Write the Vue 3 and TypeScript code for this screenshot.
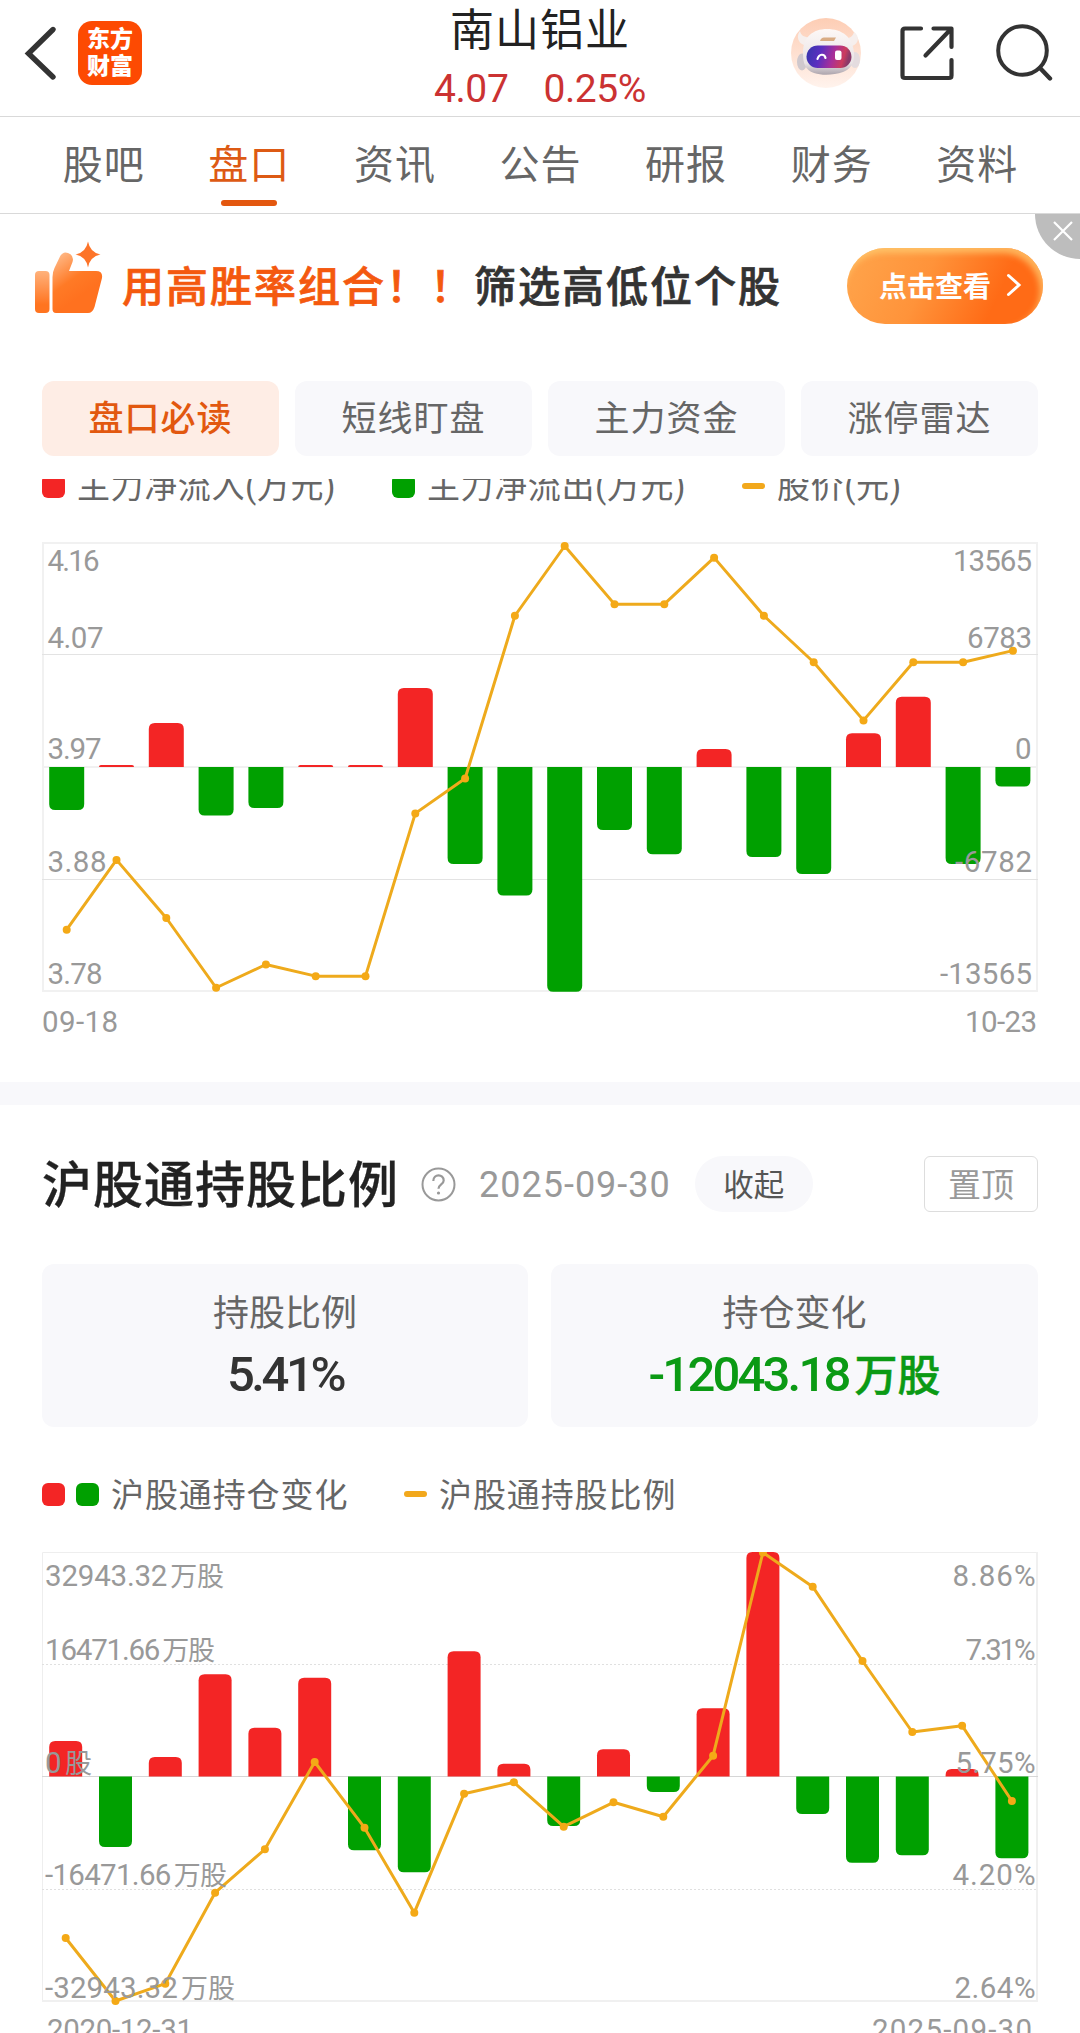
<script setup lang="ts">
interface AxisLabel {
  num: string
  unit?: string
  y: number
  w: number
}

const navTabs = ['股吧', '盘口', '资讯', '公告', '研报', '财务', '资料']
const pills = ['盘口必读', '短线盯盘', '主力资金', '涨停雷达']

const PITCH = 49.8
const barLeft = (i: number) => 7.2 + PITCH * i

// Bars run from the zero line to the value's height; rounded only on the far end.
function barPath(i: number, end: number, zero: number, width: number): string {
  const x = barLeft(i)
  const r = Math.min(6, Math.abs(end - zero))
  const d = end < zero ? 1 : -1
  return `M${x} ${zero}V${end + d * r}Q${x} ${end} ${x + r} ${end}H${x + width - r}Q${x + width} ${end} ${x + width} ${end + d * r}V${zero}Z`
}

const flowZero = 225
const flowBars = [268, 223, 181, 273.5, 266, 223, 223, 146, 322, 353.5, 449.7, 288, 312.3, 207, 315, 332, 191.3, 154.8, 322, 244.4]
const prices = [3.83, 3.89, 3.84, 3.78, 3.8, 3.79, 3.79, 3.93, 3.96, 4.1, 4.16, 4.11, 4.11, 4.15, 4.1, 4.06, 4.01, 4.06, 4.06, 4.07]
const pricePoints = prices.map((p, i) => ({ x: barLeft(i) + 17.5, y: 4 + (4.16 - p) * 1162.5 }))

const holdZero = 224.5
const holdBars = [189, 295, 205, 122.3, 175.7, 125.7, 298.3, 320.3, 99.3, 211.7, 274, 197.3, 240, 156.3, 0, 262, 310.7, 303.3, 217, 306.3]
const holdY = [386, 449, 431.7, 340.7, 297.3, 210, 275.7, 360.7, 241.7, 230.3, 274.7, 250.3, 264.7, 203.7, 0.5, 34.7, 109, 180, 173.7, 249]
const holdPoints = holdY.map((y, i) => ({ x: barLeft(i) + 16.5, y }))

const toLine = (pts: { x: number; y: number }[]) => pts.map((p) => `${p.x},${p.y}`).join(' ')

const flowLeft: AxisLabel[] = [
  { num: '4.16', y: 29.4, w: 52 },
  { num: '4.07', y: 105.5, w: 56 },
  { num: '3.97', y: 217, w: 54 },
  { num: '3.88', y: 330, w: 59 },
  { num: '3.78', y: 442.2, w: 55 },
]
const flowRight: AxisLabel[] = [
  { num: '13565', y: 29.4, w: 79 },
  { num: '6783', y: 105.5, w: 65 },
  { num: '0', y: 217, w: 17 },
  { num: '-6782', y: 330, w: 77 },
  { num: '-13565', y: 442.2, w: 92 },
]
const holdLeft: AxisLabel[] = [
  { num: '32943.32', unit: '万股', y: 34, w: 179 },
  { num: '16471.66', unit: '万股', y: 108, w: 170 },
  { num: '0', unit: '股', y: 221, w: 47 },
  { num: '-16471.66', unit: '万股', y: 333, w: 182 },
  { num: '-32943.32', unit: '万股', y: 445.7, w: 190 },
]
const holdRight: AxisLabel[] = [
  { num: '8.86%', y: 34, w: 83 },
  { num: '7.31%', y: 108, w: 70 },
  { num: '5.75%', y: 221, w: 80 },
  { num: '4.20%', y: 333, w: 83 },
  { num: '2.64%', y: 445.7, w: 81 },
]
</script>

<template>
  <div class="app">
    <header class="header">
      <div class="side left">
        <svg class="back" width="34" height="56" viewBox="0 0 34 56">
          <path d="M29 4.500L4.500 28.500L29 52" fill="none" stroke="#333" stroke-width="5.400" stroke-linecap="round" />
        </svg>
        <div class="logo"><span>东方</span><span>财富</span></div>
      </div>
      <div class="stock">
        <div class="name">南山铝业</div>
        <div class="quote"><span>4.07</span><span>0.25%</span></div>
      </div>
      <div class="side right">
        <svg width="70" height="72" viewBox="0 0 70 72">
          <defs>
            <linearGradient id="halo" x1="0" y1="0" x2="0" y2="1">
              <stop offset="0" stop-color="#fdcdb4" />
              <stop offset="1" stop-color="#fff3ed" />
            </linearGradient>
            <linearGradient id="visor" x1="0" y1="0" x2="1" y2="0.150">
              <stop offset="0" stop-color="#3436ac" />
              <stop offset="0.350" stop-color="#5b2fc0" />
              <stop offset="0.650" stop-color="#a92f98" />
              <stop offset="0.880" stop-color="#cc3c5e" />
              <stop offset="1" stop-color="#8a3a6a" />
            </linearGradient>
            <linearGradient id="shell" x1="0" y1="0" x2="0" y2="1">
              <stop offset="0" stop-color="#fdf8f6" />
              <stop offset="0.750" stop-color="#e9e3e5" />
              <stop offset="1" stop-color="#aca4ac" />
            </linearGradient>
          </defs>
          <circle cx="35" cy="36" r="35" fill="url(#halo)" />
          <path d="M9 14C5 19 7 26 13 28L21 20C14 21 10 19 9 14ZM63 15C69 19 68 27 61 29L52 21C59 22 62 19 63 15Z" fill="#f6efed" />
          <ellipse cx="11" cy="45" rx="5" ry="8.500" fill="#cfc8cd" />
          <ellipse cx="64" cy="43" rx="5" ry="8" fill="#e4dcdf" />
          <path d="M12 36C12 20 22 12 36 12C51 12 62 20 63 36C64 47 58 53 52 55C43 58 32 59 23 56C14 53 12 46 12 36Z" fill="url(#shell)" />
          <path d="M29 24Q30 20.500 33 20.500H45L43 24Z" fill="#d9ac84" />
          <rect x="15.500" y="28.500" width="45" height="22.500" rx="11.250" fill="url(#visor)" />
          <path d="M26.500 42C28 36.500 33.500 36.500 34.500 41" fill="none" stroke="#fff" stroke-width="2.200" stroke-linecap="round" />
          <rect x="44" y="33.500" width="6.500" height="9.500" rx="2" fill="#fff" />
        </svg>
        <svg class="share" width="56" height="56" viewBox="0 0 56 56">
          <path d="M22 3.500H6Q3.500 3.500 3.500 6V50.500Q3.500 53 6 53H50Q52.500 53 52.500 50.500V35M34.500 3.500H52.500V22M52 4L26.500 30.500" fill="none" stroke="#333" stroke-width="4.200" stroke-linecap="round" stroke-linejoin="round" />
        </svg>
        <svg width="58" height="60" viewBox="0 0 58 60">
          <circle cx="27.500" cy="27.500" r="24.300" fill="none" stroke="#333" stroke-width="4" />
          <path d="M45 45L55 55.500" stroke="#333" stroke-width="4.400" stroke-linecap="round" />
        </svg>
      </div>
    </header>

    <nav class="nav">
      <div v-for="(t, i) in navTabs" :key="t" class="nav-item" :class="{ on: i === 1 }">{{ t }}</div>
    </nav>

    <section class="banner">
      <svg class="thumb" width="68" height="74" viewBox="0 0 68 74">
        <defs>
          <linearGradient id="palm" x1="0.200" y1="0" x2="0.600" y2="0.700">
            <stop offset="0" stop-color="#ffb784" />
            <stop offset="0.600" stop-color="#ff7a26" />
            <stop offset="1" stop-color="#ff711f" />
          </linearGradient>
          <linearGradient id="cuff" x1="0" y1="0" x2="0" y2="1">
            <stop offset="0" stop-color="#ffb27c" />
            <stop offset="0.800" stop-color="#ff7420" />
          </linearGradient>
        </defs>
        <rect x="0" y="30" width="14.500" height="42" rx="4" fill="url(#cuff)" />
        <path d="M17.500 36Q17.500 31 19.500 27L25 15.500Q28 10 33 12Q39.500 14.500 37.500 21L34 30H61Q68 30 67 37L59.500 66Q57.500 72 53 72H21Q17.500 72 17.500 68Z" fill="url(#palm)" />
        <path d="M53 0.500Q55 11.500 65.500 13.500Q55 15.500 53 26.500Q51 15.500 40.500 13.500Q51 11.500 53 0.500Z" fill="#fd7429" />
      </svg>
      <div class="slogan"><span class="hot">用高胜率组合！！</span>筛选高低位个股</div>
      <button class="cta">
        <span>点击查看</span>
        <svg width="16" height="24" viewBox="0 0 16 24">
          <path d="M2.500 2.500L13 12L2.500 21.500" fill="none" stroke="#fff" stroke-width="3" stroke-linecap="round" />
        </svg>
      </button>
      <div class="close">
        <svg width="20" height="20" viewBox="0 0 20 20">
          <path d="M1 1L19 19M19 1L1 19" stroke="#fff" stroke-width="2.200" />
        </svg>
      </div>
    </section>

    <div class="pills">
      <div v-for="(p, i) in pills" :key="p" class="pill" :class="{ on: i === 0 }">{{ p }}</div>
    </div>

    <main class="scroll">
      <div class="legend first">
        <i class="sq red" /><span class="a">主力净流入(万元)</span>
        <i class="sq green" /><span class="b">主力净流出(万元)</span>
        <i class="dash" /><span>股价(元)</span>
      </div>

      <svg class="chart flow" width="996" height="500" viewBox="0 0 996 500">
        <rect x="1" y="1" width="994" height="448" fill="none" stroke="#f1f1f1" stroke-width="2" />
        <path d="M0 112.500H996M0 337.500H996" stroke="#e3e3e3" />
        <path d="M0 225H996" stroke="#f1f1f1" stroke-width="2" />
        <path v-for="(b, i) in flowBars" :key="i" :d="barPath(i, b, flowZero, 35)" :fill="b < flowZero ? '#f32525' : '#00a000'" />
        <polyline :points="toLine(pricePoints)" class="line" />
        <circle v-for="(p, i) in pricePoints" :key="'p' + i" :cx="p.x" :cy="p.y" r="4" class="dot" />
        <text v-for="l in flowLeft" :key="l.num" x="5.500" :y="l.y" :textLength="l.w">{{ l.num }}</text>
        <text v-for="l in flowRight" :key="l.num" :x="990 - l.w" :y="l.y" :textLength="l.w">{{ l.num }}</text>
        <text x="0" y="490.200" textLength="76">09-18</text>
        <text x="923" y="490.200" textLength="72">10-23</text>
      </svg>

      <div class="divider" />

      <div class="title-row">
        <h2>沪股通持股比例</h2>
        <svg class="help" width="35" height="35" viewBox="0 0 35 35">
          <circle cx="17.500" cy="17.500" r="16" fill="none" stroke="#999" stroke-width="2" />
          <path d="M12.300 14C12.300 6.500 22.700 6.500 22.700 13.500C22.700 17.500 17.500 17.500 17.500 21.800" fill="none" stroke="#999" stroke-width="2.200" />
          <circle cx="17.500" cy="26" r="1.600" fill="#999" />
        </svg>
        <span class="date">2025-09-30</span>
        <button class="fold">收起</button>
        <button class="pin">置顶</button>
      </div>

      <div class="cards">
        <div class="card">
          <div class="label">持股比例</div>
          <div class="value">5.41%</div>
        </div>
        <div class="card">
          <div class="label">持仓变化</div>
          <div class="value down">-12043.18<em>万股</em></div>
        </div>
      </div>

      <div class="legend second">
        <i class="sq red" /><i class="sq green" /><span class="c">沪股通持仓变化</span>
        <i class="dash" /><span>沪股通持股比例</span>
      </div>

      <svg class="chart hold" width="996" height="500" viewBox="0 0 996 500">
        <path d="M0.500 450V0.500H996" fill="none" stroke="#eee" />
        <path d="M995 0V449H0" fill="none" stroke="#f0f0f0" stroke-width="2" />
        <path d="M0 112.500H996M0 337.500H996" stroke="#e0e0e0" stroke-dasharray="2 2" />
        <path d="M0 224.500H996" stroke="#d6d6d6" />
        <path v-for="(b, i) in holdBars" :key="i" :d="barPath(i, b, holdZero, 33)" :fill="b < holdZero ? '#f32525' : '#00a000'" />
        <polyline :points="toLine(holdPoints)" class="line" />
        <circle v-for="(p, i) in holdPoints" :key="'h' + i" :cx="p.x" :cy="p.y" r="4" class="dot" />
        <text v-for="l in holdLeft" :key="l.num" x="3" :y="l.y" :textLength="l.w">{{ l.num }}<tspan class="unit" dx="3">{{ l.unit }}</tspan></text>
        <text v-for="l in holdRight" :key="l.num" :x="993.500 - l.w" :y="l.y" :textLength="l.w">{{ l.num }}</text>
        <text x="5" y="487.500" textLength="146">2020-12-31</text>
        <text x="830" y="487.500" textLength="160">2025-09-30</text>
      </svg>
    </main>
  </div>
</template>

<style>
body {
  margin: 0;
  background: #fff;
}
</style>

<style scoped>
.app {
  width: 1080px;
  height: 2033px;
  overflow: hidden;
  display: flex;
  flex-direction: column;
  background: #fff;
  color: #666;
  font-family: Roboto, 'Noto Sans CJK SC', sans-serif;
}
.app * {
  box-sizing: border-box;
}
svg {
  display: block;
  flex: none;
}
button {
  border: 0;
  padding: 0;
  font-family: inherit;
}

.header {
  height: 117px;
  flex: none;
  display: grid;
  grid-template-columns: 1fr 240px 1fr;
  border-bottom: 1px solid #d9d9d9;
}
.side {
  display: flex;
  align-items: flex-start;
}
.side.left {
  padding: 21px 0 0 24px;
}
.back {
  margin-top: 4px;
}
.logo {
  width: 64px;
  height: 64px;
  margin-left: 20px;
  border-radius: 14px;
  background: #fd4a02;
  color: #fff;
  font-size: 23px;
  line-height: 27px;
  font-weight: 900;
  display: flex;
  flex-direction: column;
  align-items: center;
  padding-top: 5px;
}
.side.right {
  justify-content: flex-end;
  padding: 17px 25px 0 0;
}
.side.right svg:last-child {
  margin: 6px 2px 0 40px;
}
.share {
  margin: 8px 0 0 38px;
}
.stock {
  display: flex;
  flex-direction: column;
  align-items: center;
}
.name {
  height: 60px;
  line-height: 62px;
  font-size: 44px;
  letter-spacing: 1px;
  color: #222;
}
.quote {
  display: flex;
  gap: 35px;
  height: 56px;
  line-height: 59px;
  font-size: 39px;
  letter-spacing: -0.400px;
  color: #cb3232;
}

.nav {
  height: 97px;
  flex: none;
  display: flex;
  padding: 0 30px 0 31px;
  border-bottom: 1px solid #d9d9d9;
}
.nav-item {
  flex: 1;
  display: flex;
  flex-direction: column;
  align-items: center;
  line-height: 98px;
  font-size: 40px;
  letter-spacing: 1px;
}
.nav-item.on {
  color: #dd5a14;
}
.nav-item.on::after {
  content: '';
  width: 56px;
  height: 6px;
  margin-top: -15px;
  border-radius: 3px;
  background: #e3570f;
}

.banner {
  position: relative;
  height: 144px;
  flex: none;
  display: flex;
  align-items: center;
  padding: 0 37px 0 35px;
}
.thumb {
  margin-top: -17px;
}
.slogan {
  margin: -6px 0 0 19px;
  font-size: 42px;
  letter-spacing: 2px;
  font-weight: 500;
  -webkit-text-stroke: 0.700px currentColor;
  color: #333;
  white-space: nowrap;
}
.hot {
  color: #f4590f;
}
.cta {
  width: 196px;
  height: 76px;
  margin-left: auto;
  border-radius: 38px;
  display: flex;
  align-items: center;
  padding: 0 0 2px 32px;
  gap: 15px;
  color: #fff;
  font-size: 28px;
  font-weight: 700;
  background: linear-gradient(115deg, #ffa54c 0%, #ff933a 40%, #ff6b16 75%, #ff6b16 100%);
  box-shadow: inset -3px 5px 6px rgba(255, 205, 115, 0.75);
}
.close {
  position: absolute;
  top: 0;
  right: 0;
  width: 45px;
  height: 45px;
  border-bottom-left-radius: 45px;
  background: #bdbdbd;
}
.close svg {
  margin: 7px 0 0 18px;
}

.pills {
  display: flex;
  flex: none;
  gap: 16px;
  height: 75px;
  margin: 23px 42px 0;
}
.pill {
  flex: 1;
  border-radius: 12px;
  background: #f8f8fb;
  line-height: 78px;
  text-align: center;
  font-size: 35px;
  letter-spacing: 1px;
}
.pill.on {
  background: #feede5;
  color: #e2580f;
  font-weight: 500;
}

.scroll {
  flex: 1;
  min-height: 0;
  margin-top: 23px;
  overflow: hidden;
}
.legend {
  display: flex;
  align-items: center;
  height: 40px;
  padding-left: 42px;
  font-size: 33px;
  letter-spacing: 0.900px;
  white-space: nowrap;
}
.legend span {
  margin: -3px 0 0 12px;
}
.legend.first {
  margin-top: -13px;
}
.legend.first span {
  margin-top: -4px;
  letter-spacing: 0.600px;
}
.a {
  width: 315px;
}
.b {
  width: 315px;
}
.legend.second {
  margin-top: 47px;
}
.c {
  width: 293px;
}
.sq {
  width: 23px;
  height: 23px;
  flex: none;
  border-radius: 6px;
}
.sq + .sq {
  margin-left: 11px;
}
.red {
  background: #f32525;
}
.green {
  background: #00a000;
}
.dash {
  width: 23px;
  height: 6px;
  flex: none;
  border-radius: 3px;
  background: #f2a81c;
}

.chart {
  margin-left: 42px;
}
.flow {
  margin-top: 36px;
}
.hold {
  margin-top: 38px;
}
.chart text {
  font-size: 29.500px;
  fill: #999;
}
.chart .unit {
  font-size: 27px;
}
.line {
  fill: none;
  stroke: #eeaa1c;
  stroke-width: 3;
  stroke-linejoin: round;
}
.dot {
  fill: #f4a916;
}

.divider {
  height: 23px;
  margin-top: 40px;
  background: #f8f8fb;
}

.title-row {
  display: flex;
  align-items: center;
  height: 56px;
  margin: 51px 42px 0;
}
h2 {
  margin: 4px 0 0;
  font-size: 50px;
  line-height: 56px;
  letter-spacing: 1px;
  font-weight: 500;
  -webkit-text-stroke: 0.300px currentColor;
  color: #222;
}
.help {
  margin-left: 22px;
}
.date {
  margin: 2px 0 0 23px;
  font-size: 36px;
  letter-spacing: 1px;
  color: #999;
}
.fold {
  width: 118px;
  height: 56px;
  margin-left: 24px;
  padding-bottom: 2px;
  border-radius: 28px;
  background: #f8f8fb;
  font-size: 30.500px;
  color: #555;
}
.pin {
  width: 114px;
  height: 56px;
  margin-left: auto;
  padding-bottom: 2px;
  border: 1px solid #ddd;
  border-radius: 6px;
  background: #fff;
  font-size: 33px;
  color: #999;
}

.cards {
  display: grid;
  grid-template-columns: 486px 487px;
  gap: 23px;
  margin: 52px 42px 0;
}
.card {
  height: 163px;
  border-radius: 12px;
  background: #f8f8fb;
  text-align: center;
}
.label {
  padding-top: 20px;
  line-height: 60px;
  font-size: 36px;
}
.value {
  line-height: 62px;
  font-size: 49px;
  font-weight: 500;
  letter-spacing: -3.400px;
  color: #333;
}
.value.down {
  letter-spacing: -2.800px;
  color: #0b9a14;
}
em {
  margin-left: 6px;
  font-style: normal;
  font-size: 43px;
  letter-spacing: 0;
  -webkit-text-stroke: 0.500px currentColor;
}
</style>
